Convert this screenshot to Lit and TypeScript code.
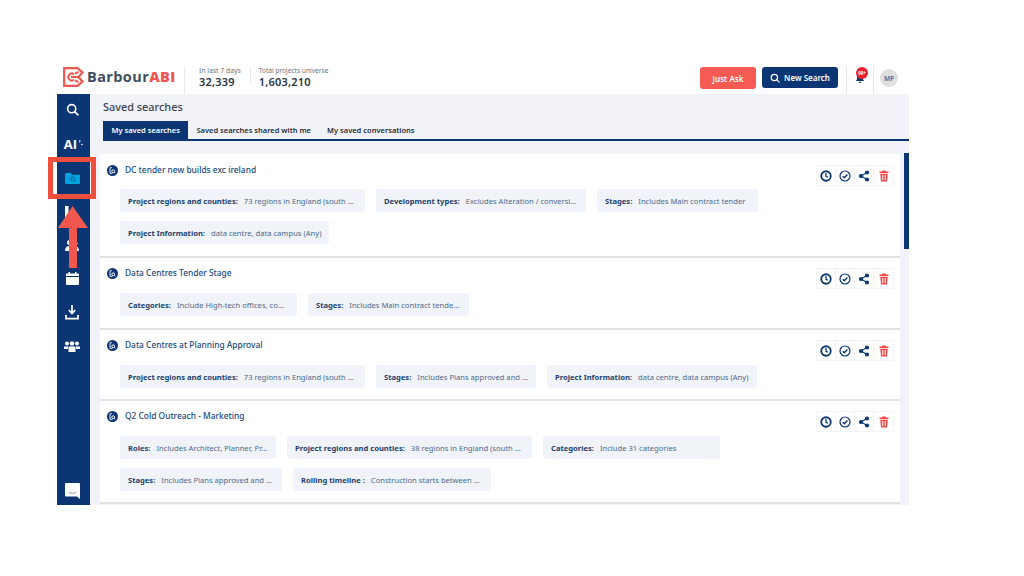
import { LitElement, html, css } from "lit";
import { customElement } from "lit/decorators.js";

interface Chip { k: string; v: string; w: number; }
interface Search { title: string; rows: Chip[][]; h: number; }

const searches: Search[] = [
  { title: "DC tender new builds exc ireland", h: 104, rows: [
    [{ k: "Project regions and counties:", v: "73 regions in England (south ...", w: 245 },
     { k: "Development types:", v: "Excludes Alteration / conversi...", w: 210 },
     { k: "Stages:", v: "Includes Main contract tender", w: 161 }],
    [{ k: "Project Information:", v: "data centre, data campus (Any)", w: 209 }],
  ]},
  { title: "Data Centres Tender Stage", h: 72, rows: [
    [{ k: "Categories:", v: "Include High-tech offices, co...", w: 177 },
     { k: "Stages:", v: "Includes Main contract tende...", w: 161 }],
  ]},
  { title: "Data Centres at Planning Approval", h: 71, rows: [
    [{ k: "Project regions and counties:", v: "73 regions in England (south ...", w: 245 },
     { k: "Stages:", v: "Includes Plans approved and ...", w: 160 },
     { k: "Project Information:", v: "data centre, data campus (Any)", w: 210 }],
  ]},
  { title: "Q2 Cold Outreach - Marketing", h: 103, rows: [
    [{ k: "Roles:", v: "Includes Architect, Planner, Pr...", w: 156 },
     { k: "Project regions and counties:", v: "38 regions in England (south ...", w: 245 },
     { k: "Categories:", v: "Include 31 categories", w: 177 }],
    [{ k: "Stages:", v: "Includes Plans approved and ...", w: 162 },
     { k: "Rolling timeline :", v: "Construction starts between ...", w: 198 }],
  ]},
];

const searchIcon = (s: number) => html`<svg width=${s} height=${s} viewBox="0 0 24 24" fill="none" stroke="currentColor" stroke-width="3" stroke-linecap="round"><circle cx="10.5" cy="10.5" r="7.5"/><path d="M16 16l6 6"/></svg>`;

@customElement("app-root")
export class AppRoot extends LitElement {
  static styles = css`
    :host { display: block; width: 1024px; height: 576px; background: #fff; position: relative; overflow: hidden;
      font-family: "Noto Sans", "Open Sans", sans-serif; color: #0b3673; }
    .app { position: absolute; left: 57px; top: 66px; width: 852px; height: 439px; display: flex; flex-direction: column; }
    header { height: 28px; display: flex; align-items: flex-start; flex: none; }
    .logo { width: 128px; height: 28px; padding-left: 6px; display: flex; align-items: flex-start; gap: 3px; border-right: 1px solid #e8eaee; box-sizing: border-box; flex: none; }
    .logo svg { margin-top: 1px; flex: none; }
    .brand { font-family: "Open Sans", sans-serif; font-weight: 700; font-size: 14.5px; line-height: 20px; color: #414e60; margin-top: 1px; letter-spacing: 0.4px; white-space: nowrap; }
    .brand b { color: #f1574e; }
    .stat { display: flex; flex-direction: column; padding: 0 0 0 14px; }
    .stat small { font-size: 6.8px; line-height: 9px; color: #6b7480; white-space: nowrap; }
    .stat strong { font-size: 11px; line-height: 13px; font-weight: 600; color: #2c3440; letter-spacing: 0.2px; }
    .divider { width: 1px; height: 16px; background: #e8eaee; margin: 1px 0 0 9px; flex: none; }
    .stat.two { padding-left: 8px; }
    .stat.two small { font-size: 6.6px; }
    .spacer { flex: 1; }
    .btn { height: 21px; border-radius: 3px; font-size: 8px; font-weight: 600; color: #fff; display: flex; align-items: center; justify-content: center; gap: 4px; box-sizing: border-box; margin-top: 1px; white-space: nowrap; flex: none; }
    .ask { width: 56px; background: #f55a53; margin-right: 6px; height: 22px; }
    .new { width: 76px; background: #0b3673; }
    .bell { width: 28px; height: 28px; margin-left: 8px; border-left: 1px solid #e8eaee; border-right: 1px solid #e8eaee; box-sizing: border-box; position: relative; flex: none; }
    .bell svg { position: absolute; left: 8px; top: 7px; }
    .badge { position: absolute; left: 9px; top: 1px; width: 12px; height: 12px; border-radius: 50%; background: #e8202f; color: #fff; font-size: 4.5px; font-weight: 700; text-align: center; line-height: 12px; }
    .avatar { width: 18px; height: 18px; border-radius: 50%; background: #dedede; color: #3f6c9e; font-size: 6.5px; font-weight: 600; display: flex; align-items: center; justify-content: center; margin: 3px 11px 0 6px; flex: none; }
    .body { flex: 1; display: flex; min-height: 0; }
    nav { width: 33px; background: #0b3673; flex: none; color: #fff; display: flex; flex-direction: column; align-items: center; box-sizing: border-box; padding-right: 3px; }
    .ni { display: flex; align-items: center; justify-content: center; flex: none; width: 100%; }
    .ai { font-weight: 700; font-size: 13px; font-family: "Open Sans", sans-serif; gap: 1px; padding-left: 3px; box-sizing: border-box; }
    .grow { flex: 1; }
    main { flex: 1; background: #f1f3f8; display: flex; flex-direction: column; min-width: 0; }
    h1 { margin: 0; font-size: 10.9px; line-height: 15px; font-weight: 500; color: #3a4350; padding: 5px 0 0 13px; height: 22px; flex: none; white-space: nowrap; }
    .tabs { display: flex; height: 18px; margin-left: 13px; border-bottom: 2px solid #0b3673; flex: none; align-items: stretch; }
    .tab { font-size: 7.5px; font-weight: 600; color: #1f2c40; line-height: 18px; padding: 0 8px; white-space: nowrap; }
    .tab.on { background: #0b3673; color: #fff; padding: 0 8.500px; }
    .list { flex: 1; margin: 13px 0 0 10px; width: 800px; display: flex; flex-direction: column; overflow: hidden; }
    .card { background: #fff; padding: 7px 0 0 7px; box-sizing: border-box; position: relative; flex: none; border-bottom: 2px solid #e2e3e6; }
    .card:first-child { padding-top: 8px; }
    .title { display: flex; align-items: center; gap: 7px; font-size: 8.4px; font-weight: 500; color: #174a80; height: 14px; white-space: nowrap; }
    .ic { width: 11px; height: 11px; border-radius: 50%; background: #0b3673; display: flex; align-items: center; justify-content: center; flex: none; margin-top: 3px; }
    .row { display: flex; gap: 11px; margin: 0 0 9px 13px; height: 23px; }
    .rows { padding-top: 14px; }
    .card:first-child .rows { padding-top: 13px; }
    .chip { background: #f0f3f7; border-radius: 3px; height: 23px; padding: 0 8px; box-sizing: border-box; font-size: 7.6px; display: flex; align-items: center; gap: 6px; white-space: nowrap; overflow: hidden; flex: none; color: #4e6a8e; }
    .chip b { color: #1d3f6e; font-weight: 700; }
    .acts { position: absolute; right: 6px; top: 10px; display: flex; border: 1px solid #f3f4f6; height: 19px; }
    .card:first-child .acts { top: 11px; }
    .act { width: 19px; display: flex; align-items: center; justify-content: center; border-right: 1px solid #f3f4f6; box-sizing: border-box; color: #0b3673; }
    .act:last-child { border-right: 0; color: #f2484a; }
    .scroll { position: absolute; left: 904px; top: 153px; width: 5px; height: 96px; background: #0b3673; }
    .hl { position: absolute; left: 48px; top: 157px; width: 48px; height: 42px; box-sizing: border-box; border: 5.500px solid #ee4f3c; }
    .arrow { position: absolute; left: 58px; top: 206px; }
  `;

  private actions() {
    return html`<div class="acts">
      <div class="act"><svg width="12" height="12" viewBox="0 0 24 24" fill="none" stroke="currentColor" stroke-width="3.6"><circle cx="12" cy="12" r="9.5"/><path d="M12 6v6.500l4 2" stroke-width="2.600"/></svg></div>
      <div class="act"><svg width="12" height="12" viewBox="0 0 24 24" fill="none" stroke="currentColor" stroke-width="2.400"><circle cx="12" cy="12" r="10"/><path d="M7.500 12.500l3.200 3 6-6.500" stroke-width="2.800"/></svg></div>
      <div class="act"><svg width="12" height="12" viewBox="0 0 24 24" fill="currentColor" stroke="currentColor" stroke-width="2.400"><circle cx="18" cy="5" r="3"/><circle cx="6" cy="12" r="3"/><circle cx="18" cy="19" r="3"/><path d="M6 12L18 5M6 12l12 7" fill="none"/></svg></div>
      <div class="act"><svg width="12" height="12" viewBox="0 0 24 24" fill="currentColor"><path d="M9 1h6l1 2h5v3H3V3h5zM4.500 7.500h15L18 23H6zM8.500 10v10h2V10zm5 0v10h2V10z" fill-rule="evenodd"/></svg></div>
    </div>`;
  }

  render() {
    return html`
      <div class="app">
        <header>
          <div class="logo">
            <svg width="21" height="20" viewBox="0 0 21 20" fill="none" stroke="#f1574e" stroke-width="2.300">
              <path d="M1.200 1.200h13.300l5 4.300-4 4.500 4 4.500-5 4.300H1.200z" />
              <path d="M11 7.200a3.500 3.500 0 1 0 0 5.600M8 10h7.500M12 13.500l3.500 1.500M12 6.500l3.500-1.500" stroke-width="2"/>
            </svg>
            <div class="brand">Barbour<b>ABI</b></div>
          </div>
          <div class="stat"><small>In last 7 days</small><strong>32,339</strong></div>
          <div class="divider"></div>
          <div class="stat two"><small>Total projects universe</small><strong>1,603,210</strong></div>
          <div class="spacer"></div>
          <div class="btn ask">Just Ask</div>
          <div class="btn new">${searchIcon(10)}New Search</div>
          <div class="bell">
            <svg width="10" height="10" viewBox="0 0 24 24" fill="#0b3673"><path d="M12 2a7 7 0 0 0-7 7v6l-3 4h20l-3-4V9a7 7 0 0 0-7-7zM9 21a3 3 0 0 0 6 0z"/></svg>
            <div class="badge">99+</div>
          </div>
          <div class="avatar">MP</div>
        </header>
        <div class="body">
          <nav>
            <div class="ni" style="height:30px">${searchIcon(13)}</div>
            <div class="ni ai" style="height:39px">AI<svg width="5" height="8" viewBox="0 0 5 8" fill="#fff"><path d="M1.500 0l1 0-.5 2.500h-.8z"/><circle cx="4" cy="4.500" r=".8"/></svg></div>
            <div class="ni" style="height:31px"><svg width="15" height="11" viewBox="0 0 15 11"><path d="M0 1a1 1 0 0 1 1-1h4.500l1.500 1.800h7a1 1 0 0 1 1 1V10a1 1 0 0 1-1 1H1a1 1 0 0 1-1-1z" fill="#00a3e0"/><g fill="none" stroke="#0b5a94" stroke-width=".9"><circle cx="7.500" cy="5.800" r="1.900"/><path d="M9 7.300l1.800 1.800"/></g></svg></div>
            <div class="ni" style="height:36px"><svg width="14" height="13" viewBox="0 0 14 13"><path d="M0 0h3.500v13H0zM5 5h3v8H5z" fill="#fff"/></svg></div>
            <div class="ni" style="height:30px"><svg width="14" height="11" viewBox="0 0 14 11" fill="#fff"><circle cx="4.500" cy="2.500" r="2.500"/><circle cx="10.500" cy="3.500" r="2"/><path d="M0 11c0-3.500 2-5 4.500-5S9 7.500 9 11zM10 11c0-2-.5-3.500-1.500-4.500 3-1 5.500.5 5.500 4.500z"/></svg></div>
            <div class="ni" style="height:36px"><svg width="13" height="13" viewBox="0 0 13 13" fill="#fff"><path d="M0 2.500a1 1 0 0 1 1-1h1.500V0h1.500v1.500h5V0h1.500v1.500H12a1 1 0 0 1 1 1V4H0zM0 5h13v7a1 1 0 0 1-1 1H1a1 1 0 0 1-1-1z"/></svg></div>
            <div class="ni" style="height:32px"><svg width="14" height="15" viewBox="0 0 14 15" fill="none" stroke="#fff" stroke-width="1.700"><path d="M7 0v8M3.800 5l3.200 3.500L10.200 5" /><path d="M1 10v3.600h12V10"/></svg></div>
            <div class="ni" style="height:36px"><svg width="16" height="11" viewBox="0 0 16 11" fill="#fff"><circle cx="3" cy="2.500" r="2"/><circle cx="8" cy="2.500" r="2.300"/><circle cx="13" cy="2.500" r="2"/><path d="M0 5.500h4v2.500H0zM12 5.500h4v2.500h-4zM4.500 5.500h7V11h-7z"/></svg></div>
            <div class="grow"></div>
            <div class="ni" style="height:22px;align-items:flex-start"><svg width="15" height="16" viewBox="0 0 15 16"><path d="M1 0h13a1 1 0 0 1 1 1v15l-3-2.500H1a1 1 0 0 1-1-1V1a1 1 0 0 1 1-1z" fill="#fff"/><path d="M4 9.500q3.500 2 7 0" fill="none" stroke="#8296b0" stroke-width="1"/></svg></div>
          </nav>
          <main>
            <h1>Saved searches</h1>
            <div class="tabs">
              <div class="tab on">My saved searches</div>
              <div class="tab">Saved searches shared with me</div>
              <div class="tab">My saved conversations</div>
            </div>
            <div class="list">
              ${searches.map((s) => html`
                <div class="card" style="height:${s.h}px">
                  <div class="title">
                    <span class="ic"><svg width="7" height="7" viewBox="0 0 10 10" fill="none" stroke="#fff" stroke-width="1.300"><path d="M4 1H1.500v8H5"/><circle cx="6" cy="6" r="2"/><path d="M7.500 7.500L9 9"/></svg></span>
                    ${s.title}
                  </div>
                  <div class="rows">
                    ${s.rows.map((r) => html`<div class="row">
                      ${r.map((c) => html`<div class="chip" style="width:${c.w}px"><b>${c.k}</b><span>${c.v}</span></div>`)}
                    </div>`)}
                  </div>
                  ${this.actions()}
                </div>`)}
            </div>
          </main>
        </div>
      </div>
      <div class="scroll"></div>
      <div class="hl"></div>
      <svg class="arrow" width="30" height="62" viewBox="0 0 30 62"><path d="M14.500 0L30 22H19v40h-8V22H0z" fill="#f1574e"/></svg>
    `;
  }
}
